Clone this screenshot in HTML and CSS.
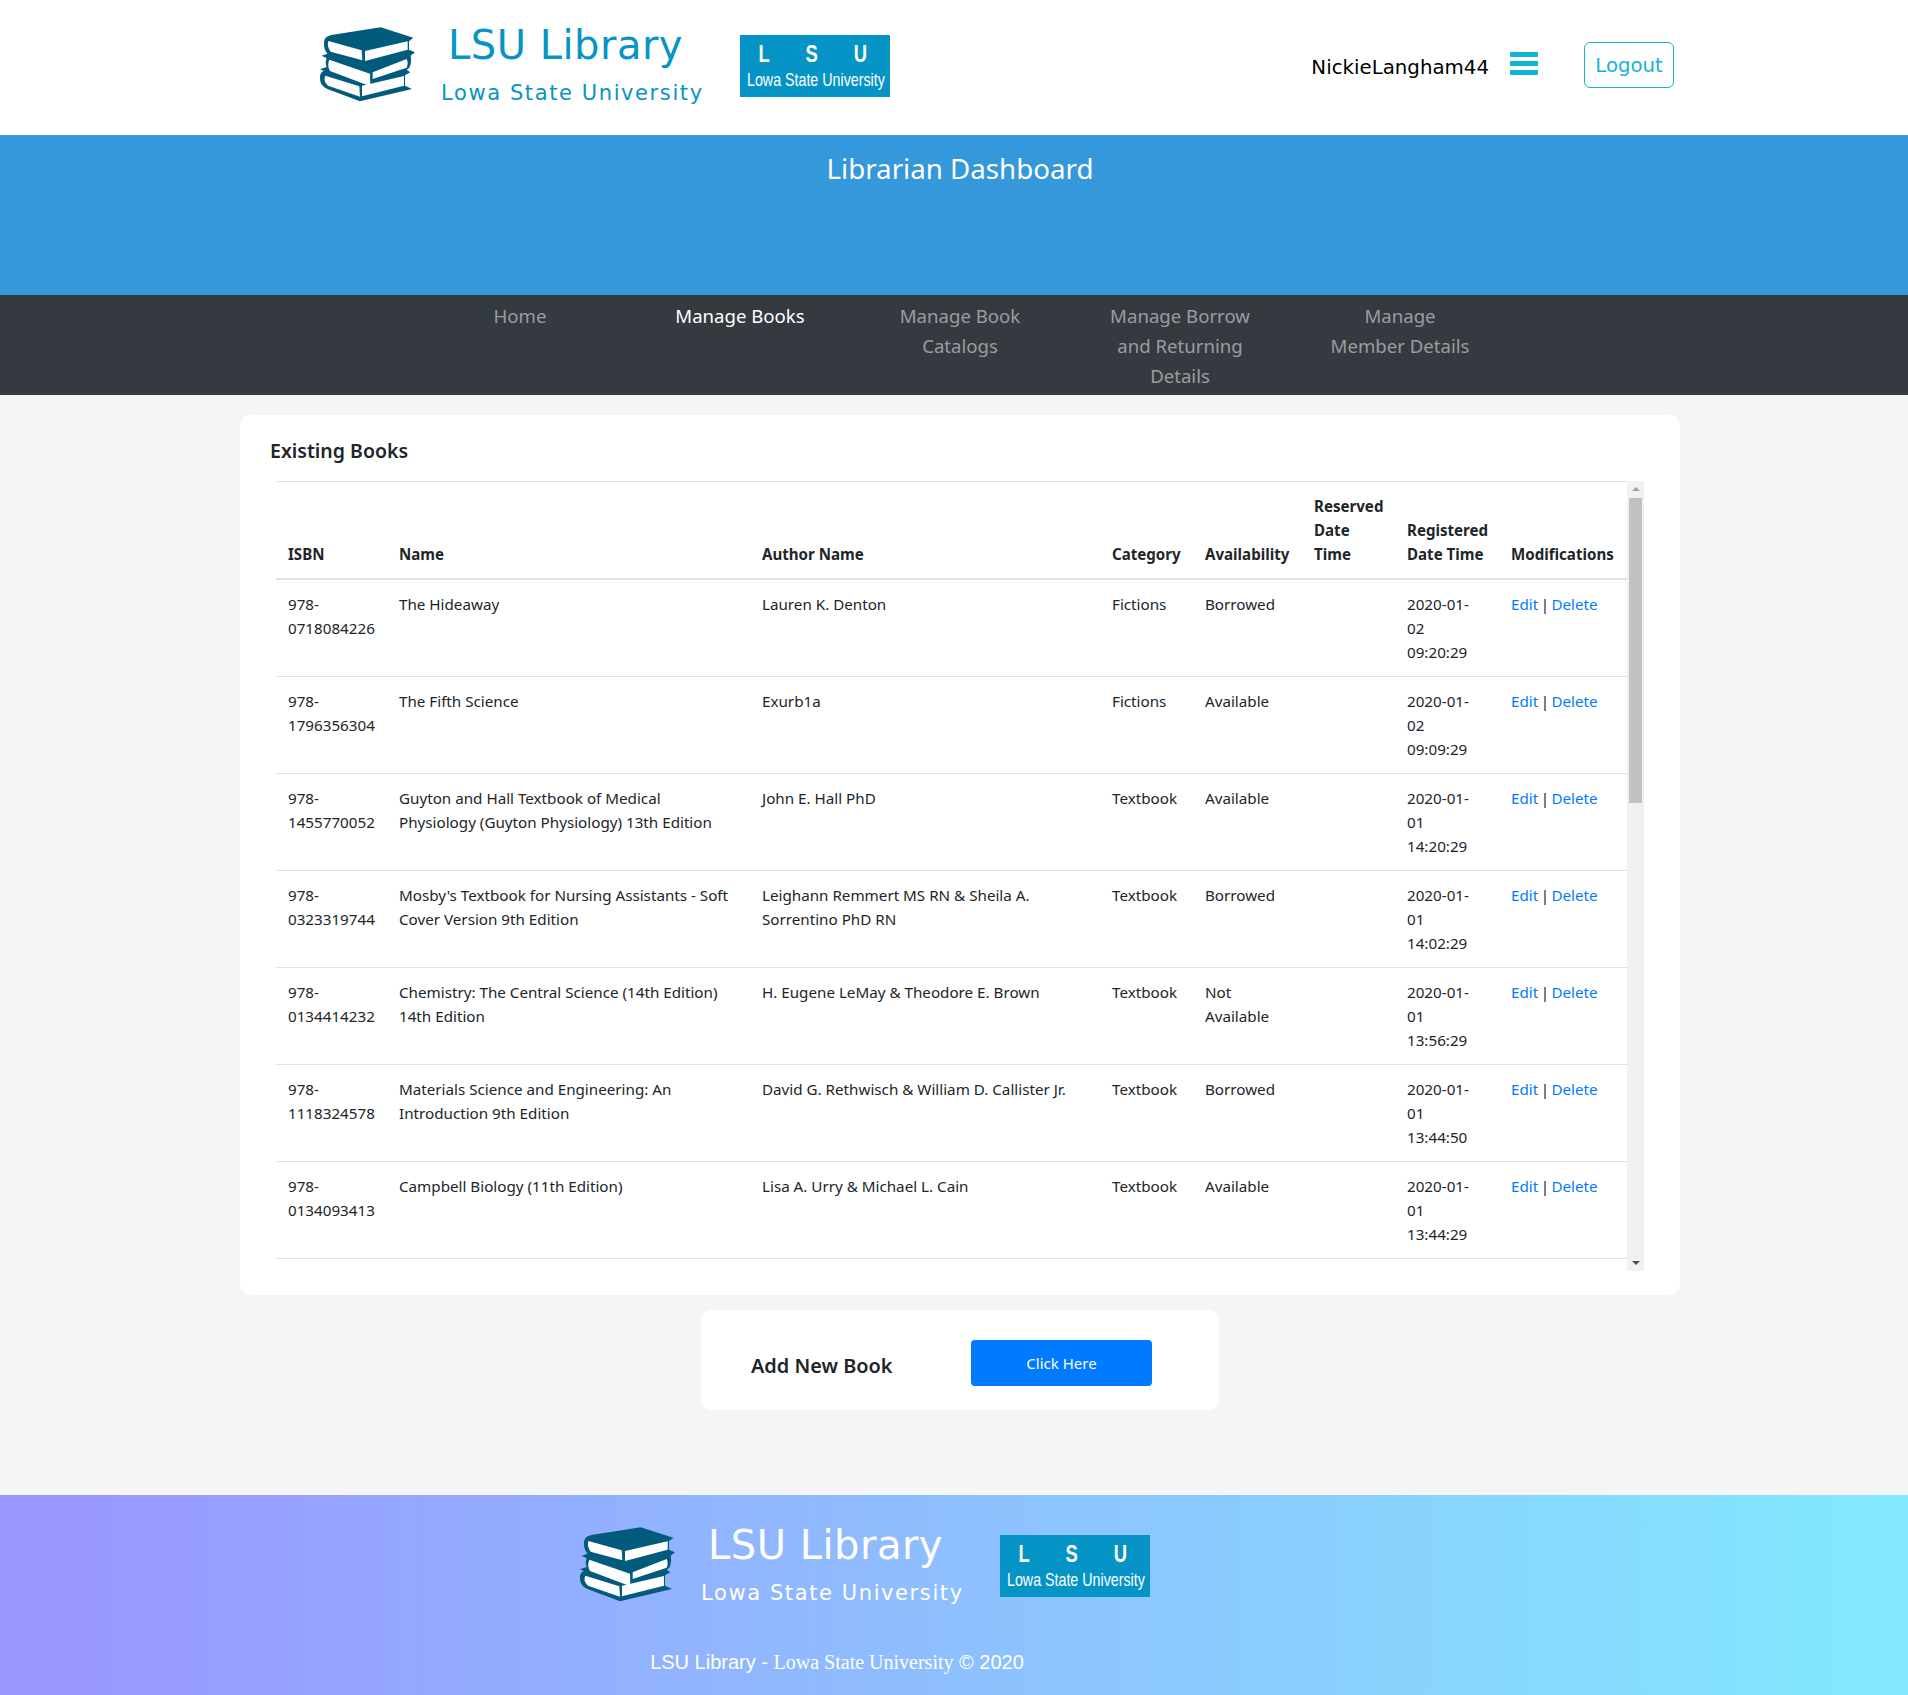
FILE: index.html
```html
<!DOCTYPE html>
<html lang="en">
<head>
  <meta charset="UTF-8">
  <meta name="viewport" content="width=device-width, initial-scale=1.0">
  <title>LSU Library - Librarian Dashboard</title>
  <link rel="stylesheet" href="styles.css">
</head>
<body>
  <svg class="sprite" width="0" height="0">
    <symbol id="books" viewBox="0 0 360 285">
      <path fill="#025a7c" d="M42 80 Q44 64 64 60 L212 37 L310 68 L297 79 L297 104 L315 112 L302 122 Q306 142 298 158 L290 164 L301 172 L285 181 L285 212 L306 222 L150 259 L52 222 Q28 212 30 186 Q30 172 42 168 L30 163 L50 156 Q44 142 50 130 L35 122 L52 116 Q40 100 42 80Z"/>
      <path fill="#fff" d="M55 78 L155 106 L157 136 L62 110 Q50 95 55 78Z"/>
      <path fill="#fff" d="M165 108 L293 79 L293 104 L165 138Z"/>
      <path fill="#fff" d="M58 134 L180 176 L181 214 L60 168 Q50 150 58 134Z"/>
      <path fill="#fff" d="M188 172 L290 132 Q296 145 290 158 L188 192Z"/>
      <path fill="#fff" d="M46 182 L148 214 L150 245 L54 212 Q38 197 46 182Z"/>
      <path fill="#fff" d="M156 212 L282 183 L282 212 L156 244Z"/>
    </symbol>
  </svg>

  <header class="site-header">
    <div class="logo-row">
      <svg class="logo-books"><use href="#books"/></svg>
      <div class="logo-text">
        <div class="logo-title">LSU Library</div>
        <div class="logo-sub">Lowa State University</div>
      </div>
      <div class="logo-badge">
        <div class="badge-letters"><span>L</span><span>S</span><span>U</span></div>
        <div class="badge-name">Lowa State University</div>
      </div>
    </div>
    <div class="user-box">
      <span class="username">NickieLangham44</span>
      <svg class="bars" viewBox="0 0 28 23">
        <rect width="28" height="5" rx="1"/>
        <rect y="9" width="28" height="5" rx="1"/>
        <rect y="18" width="28" height="5" rx="1"/>
      </svg>
      <a class="logout" href="#">Logout</a>
    </div>
  </header>

  <section class="banner">
    <h1>Librarian Dashboard</h1>
  </section>

  <nav class="main-nav">
    <a href="#">Home</a>
    <a class="active" href="#">Manage Books</a>
    <a href="#">Manage Book<br>Catalogs</a>
    <a href="#">Manage Borrow<br>and Returning<br>Details</a>
    <a href="#">Manage<br>Member Details</a>
  </nav>

  <main>
    <section class="card books-card">
      <h3>Existing Books</h3>
      <div class="table-wrap">
        <div class="table-scroll">
          <table>
            <colgroup>
              <col class="c-isbn"><col class="c-name"><col class="c-author"><col class="c-cat">
              <col class="c-avail"><col class="c-res"><col class="c-reg"><col class="c-mod">
            </colgroup>
            <thead>
              <tr>
                <th>ISBN</th><th>Name</th><th>Author Name</th><th>Category</th><th>Availability</th>
                <th>Reserved<br>Date<br>Time</th><th>Registered<br>Date Time</th><th>Modifications</th>
              </tr>
            </thead>
            <tbody>
              <tr>
                <td>978-<br>0718084226</td><td>The Hideaway</td><td>Lauren K. Denton</td><td>Fictions</td><td>Borrowed</td><td></td>
                <td>2020-01-<br>02<br>09:20:29</td><td class="mods"><a href="#">Edit</a> | <a href="#">Delete</a></td>
              </tr>
              <tr>
                <td>978-<br>1796356304</td><td>The Fifth Science</td><td>Exurb1a</td><td>Fictions</td><td>Available</td><td></td>
                <td>2020-01-<br>02<br>09:09:29</td><td class="mods"><a href="#">Edit</a> | <a href="#">Delete</a></td>
              </tr>
              <tr>
                <td>978-<br>1455770052</td><td>Guyton and Hall Textbook of Medical<br>Physiology (Guyton Physiology) 13th Edition</td><td>John E. Hall PhD</td><td>Textbook</td><td>Available</td><td></td>
                <td>2020-01-<br>01<br>14:20:29</td><td class="mods"><a href="#">Edit</a> | <a href="#">Delete</a></td>
              </tr>
              <tr>
                <td>978-<br>0323319744</td><td>Mosby's Textbook for Nursing Assistants - Soft Cover Version 9th Edition</td><td>Leighann Remmert MS RN &amp; Sheila A. Sorrentino PhD RN</td><td>Textbook</td><td>Borrowed</td><td></td>
                <td>2020-01-<br>01<br>14:02:29</td><td class="mods"><a href="#">Edit</a> | <a href="#">Delete</a></td>
              </tr>
              <tr>
                <td>978-<br>0134414232</td><td>Chemistry: The Central Science (14th Edition) 14th Edition</td><td>H. Eugene LeMay &amp; Theodore E. Brown</td><td>Textbook</td><td>Not<br>Available</td><td></td>
                <td>2020-01-<br>01<br>13:56:29</td><td class="mods"><a href="#">Edit</a> | <a href="#">Delete</a></td>
              </tr>
              <tr>
                <td>978-<br>1118324578</td><td>Materials Science and Engineering: An Introduction 9th Edition</td><td>David G. Rethwisch &amp; William D. Callister Jr.</td><td>Textbook</td><td>Borrowed</td><td></td>
                <td>2020-01-<br>01<br>13:44:50</td><td class="mods"><a href="#">Edit</a> | <a href="#">Delete</a></td>
              </tr>
              <tr>
                <td>978-<br>0134093413</td><td>Campbell Biology (11th Edition)</td><td>Lisa A. Urry &amp; Michael L. Cain</td><td>Textbook</td><td>Available</td><td></td>
                <td>2020-01-<br>01<br>13:44:29</td><td class="mods"><a href="#">Edit</a> | <a href="#">Delete</a></td>
              </tr>
            </tbody>
          </table>
        </div>
        <div class="scrollbar">
          <span class="arrow-up"></span>
          <div class="track"><div class="thumb"></div></div>
          <span class="arrow-down"></span>
        </div>
      </div>
    </section>

    <section class="card add-card">
      <h3>Add New Book</h3>
      <a class="btn-primary" href="#">Click Here</a>
    </section>
  </main>

  <footer class="site-footer">
    <div class="logo-row">
      <svg class="logo-books"><use href="#books"/></svg>
      <div class="logo-text">
        <div class="logo-title">LSU Library</div>
        <div class="logo-sub">Lowa State University</div>
      </div>
      <div class="logo-badge">
        <div class="badge-letters"><span>L</span><span>S</span><span>U</span></div>
        <div class="badge-name">Lowa State University</div>
      </div>
    </div>
    <p class="copy">LSU Library - <span class="copy-serif">Lowa State University</span> &copy; 2020</p>
  </footer>
</body>
</html>
```

FILE: styles.css
```css
html {
  overflow-x: hidden;
}

body {
  width: 1920px;
  margin: 0;
  background-color: #f5f5f5;
  color: #212529;
  font-family: "Noto Sans", sans-serif;
  font-size: 15px;
  line-height: 24px;
}

a {
  text-decoration: none;
}

.sprite {
  position: absolute;
}

/* header */
.site-header {
  display: flex;
  justify-content: space-between;
  height: 135px;
  padding: 0 246px 0 310px;
  box-sizing: border-box;
  background-color: #fff;
}

.logo-row {
  display: flex;
  align-items: flex-start;
  height: 135px;
}

.logo-books {
  width: 120px;
  height: 95px;
  margin-top: 15px;
}

.logo-text {
  width: 299px;
  margin-left: 11px;
  font-family: "DejaVu Sans", sans-serif;
  color: #0694c6;
}

.logo-title {
  margin: 21px 0 0 7px;
  font-size: 40px;
  line-height: 48px;
  letter-spacing: 0.5px;
  white-space: nowrap;
}

.logo-sub {
  margin-top: 11px;
  font-size: 21px;
  line-height: 26px;
  letter-spacing: 1.6px;
  white-space: nowrap;
}

.logo-badge {
  width: 150px;
  height: 62px;
  margin-top: 35px;
  background-color: #0694c6;
  color: #fff;
  font-family: "Liberation Sans", sans-serif;
  overflow: hidden;
}

.badge-letters {
  display: flex;
  justify-content: space-between;
  width: 112px;
  margin: 6px 0 0 17px;
  font-size: 23px;
  font-weight: bold;
  line-height: 26px;
}

.badge-letters span {
  transform: scaleX(0.8);
}

.badge-name {
  width: 180px;
  margin: 1px 0 0 7px;
  font-size: 19px;
  line-height: 24px;
  white-space: nowrap;
  transform: scaleX(0.75);
  transform-origin: left center;
}

.user-box {
  display: flex;
  align-items: flex-start;
  font-family: "DejaVu Sans", sans-serif;
}

.username {
  margin-top: 53px;
  font-size: 19.8px;
  line-height: 30px;
  color: #000;
}

.bars {
  width: 28px;
  height: 23px;
  margin: 52px 46px 0 21px;
  fill: #0fb4d4;
}

.logout {
  width: 90px;
  height: 46px;
  margin-top: 42px;
  border: 1px solid #17b2d3;
  border-radius: 6px;
  box-sizing: border-box;
  color: #17b2d3;
  font-size: 19.7px;
  line-height: 46px;
  text-align: center;
}

/* banner + nav */
.banner {
  height: 160px;
  background-color: #3498db;
  color: #fff;
  text-align: center;
}

.banner h1 {
  margin: 0;
  padding-top: 12px;
  font-size: 27.7px;
  font-weight: 400;
  line-height: 42px;
}

.main-nav {
  display: flex;
  justify-content: center;
  height: 100px;
  padding-top: 6px;
  box-sizing: border-box;
  background-color: #343a40;
}

.main-nav a {
  width: 220px;
  color: rgba(255, 255, 255, 0.5);
  font-size: 18.6px;
  line-height: 30px;
  text-align: center;
}

.main-nav a.active {
  color: #fff;
}

/* cards */
.card {
  background-color: #fff;
  border-radius: 10px;
}

.card h3 {
  margin: 0;
  font-size: 19.5px;
  font-weight: 600;
  line-height: 32px;
}

.books-card {
  width: 1440px;
  height: 880px;
  margin: 20px auto 0;
  padding: 20px 0 0 30px;
  box-sizing: border-box;
}

.table-wrap {
  display: flex;
  width: 1368px;
  height: 790px;
  margin: 14px 0 0 6px;
}

.table-scroll {
  width: 1351px;
  overflow: hidden;
}

table {
  width: 1351px;
  border-collapse: collapse;
  table-layout: fixed;
}

.c-isbn { width: 111px; }
.c-name { width: 363px; }
.c-author { width: 350px; }
.c-cat { width: 93px; }
.c-avail { width: 109px; }
.c-res { width: 93px; }
.c-reg { width: 104px; }
.c-mod { width: 128px; }

th,
td {
  padding: 12px;
  text-align: left;
  vertical-align: top;
  border-top: 1px solid #dee2e6;
}

td {
  font-size: 15.2px;
}

th {
  font-size: 15.1px;
  font-weight: 700;
  vertical-align: bottom;
  border-bottom: 2px solid #dee2e6;
  white-space: nowrap;
}

tbody tr:last-child td {
  border-bottom: 1px solid #dee2e6;
}

td a {
  color: #007bff;
}

.mods {
  word-spacing: -1.5px;
}

.scrollbar {
  display: flex;
  flex-direction: column;
  width: 17px;
  background-color: #f1f1f1;
}

.arrow-up,
.arrow-down {
  width: 0;
  height: 0;
  margin: 6px auto;
  border-left: 4px solid transparent;
  border-right: 4px solid transparent;
}

.arrow-up {
  border-bottom: 4px solid #a3a3a3;
}

.arrow-down {
  border-top: 4px solid #505050;
}

.track {
  flex: 1;
}

.thumb {
  width: 13px;
  height: 305px;
  margin: 1px 0 0 2px;
  background-color: #c1c1c1;
}

.add-card {
  display: flex;
  align-items: flex-start;
  width: 518px;
  height: 100px;
  margin: 15px auto 0;
  padding: 30px 0 0 50px;
  box-sizing: border-box;
}

.add-card h3 {
  width: 220px;
  margin-top: 10px;
  font-size: 19.9px;
}

.btn-primary {
  width: 181px;
  height: 46px;
  border-radius: 4px;
  background-color: #007bff;
  color: #fff;
  font-size: 15px;
  line-height: 46px;
  text-align: center;
}

/* footer */
.site-footer {
  height: 200px;
  margin-top: 85px;
  padding: 5px 0 0 570px;
  box-sizing: border-box;
  background: linear-gradient(to right, #9a95ff, #82eafe);
  color: #fff;
}

.site-footer .logo-text {
  color: #fff;
}

.copy {
  width: 760px;
  margin: 12px 0 0 -113px;
  font-family: "Liberation Sans", sans-serif;
  font-size: 20px;
  line-height: 30px;
  text-align: center;
}

.copy-serif {
  font-family: "Liberation Serif", serif;
}
```
